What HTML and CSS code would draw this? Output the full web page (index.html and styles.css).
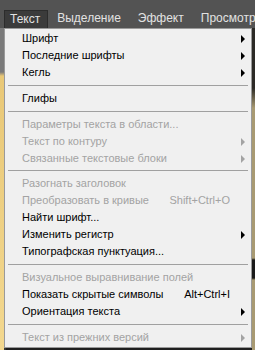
FILE: index.html
```html
<!DOCTYPE html>
<html>
<head>
<meta charset="utf-8">
<link rel="stylesheet" href="styles.css">
</head>
<body>
<div class="menubar">
  <span class="title active">Текст</span>
  <span class="title">Выделение</span>
  <span class="title">Эффект</span>
  <span class="title">Просмотр</span>
</div>
<div class="workspace">
  <div class="strip left"></div>
  <div class="menu">
    <div class="item sub">Шрифт</div>
    <div class="item sub">Последние шрифты</div>
    <div class="item sub">Кегль</div>
    <div class="sep"></div>
    <div class="item">Глифы</div>
    <div class="sep"></div>
    <div class="item off">Параметры текста в области...</div>
    <div class="item off sub">Текст по контуру</div>
    <div class="item off sub">Связанные текстовые блоки</div>
    <div class="sep"></div>
    <div class="item off">Разогнать заголовок</div>
    <div class="item off"><span>Преобразовать в кривые</span><span class="key">Shift+Ctrl+O</span></div>
    <div class="item">Найти шрифт...</div>
    <div class="item sub">Изменить регистр</div>
    <div class="item">Типографская пунктуация...</div>
    <div class="sep"></div>
    <div class="item off">Визуальное выравнивание полей</div>
    <div class="item"><span>Показать скрытые символы</span><span class="key">Alt+Ctrl+I</span></div>
    <div class="item sub">Ориентация текста</div>
    <div class="sep"></div>
    <div class="item off sub">Текст из прежних версий</div>
  </div>
  <div class="strip right"></div>
</div>
</body>
</html>
```
FILE: styles.css
```css
html, body {
  margin: 0;
  padding: 0;
}
body {
  width: 255px;
  height: 350px;
  overflow: hidden;
  background: #3a3a3a;
  font-family: "Liberation Sans", Arial, sans-serif;
}
.menubar {
  height: 28px;
  background: #535353;
  display: flex;
  align-items: flex-end;
  padding-left: 4px;
  box-sizing: border-box;
  white-space: nowrap;
  overflow: hidden;
}
.title {
  color: #e2e2e2;
  font-size: 12px;
  height: 18px;
  line-height: 17px;
  padding: 0 8px;
  margin-right: 1px;
  box-sizing: border-box;
  flex: none;
}
.title:last-child {
  padding-right: 0;
}
.title.active {
  background: #3b3b3b;
  border: 1px solid #2c2c2c;
  border-bottom: none;
  padding: 0 7px 0 5px;
}
.workspace {
  display: flex;
  height: 322px;
}
.strip.left {
  width: 4px;
  background: linear-gradient(#7a7a7a 0, #7a7a7a 44px, #e9c877 48px, #f3d88f 100%);
}
.strip.right {
  flex: 1;
  background: linear-gradient(#2c2a26 0, #2c2a26 60px, #a89a72 80px, #a89a72 230px, #1a1a1a 232px, #1a1a1a 250px, #a89a72 252px);
}
.menu {
  width: 248px;
  height: 320px;
  box-sizing: border-box;
  background: #f0f0f0;
  border: 1px solid #9a9a9a;
  padding: 1px 0;
  display: flex;
  flex-direction: column;
  box-shadow: 2px 2px 1px rgba(0,0,0,0.45);
}
.item {
  height: 17px;
  line-height: 17px;
  font-size: 11px;
  color: #000;
  padding-left: 17px;
  padding-right: 20px;
  display: flex;
  justify-content: space-between;
  position: relative;
  white-space: nowrap;
}
.item.off {
  color: #a3a3a3;
}
.key {
  padding-right: 1px;
}
.item.sub::after {
  content: "";
  position: absolute;
  right: 6px;
  top: 5px;
  border-left: 4px solid #000;
  border-top: 4px solid transparent;
  border-bottom: 4px solid transparent;
}
.item.off.sub::after {
  border-left-color: #a3a3a3;
}
.sep {
  height: 9px;
  display: flex;
  align-items: center;
  padding: 0 3px;
}
.sep::before {
  content: "";
  flex: 1;
  height: 1px;
  background: #a0a0a0;
}
```
